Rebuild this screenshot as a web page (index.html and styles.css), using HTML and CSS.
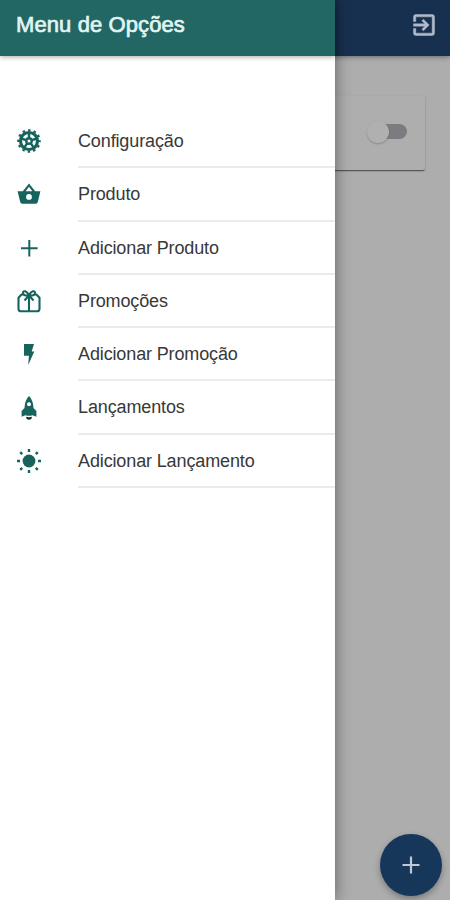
FILE: index.html
```html
<!DOCTYPE html>
<html lang="pt-BR">
<head>
<meta charset="utf-8">
<title>Menu de Opções</title>
<link rel="stylesheet" href="styles.css">
</head>
<body>
<div class="app">
  <header class="topbar">
    <svg class="exit" viewBox="0 0 24 24"><path fill="currentColor" stroke="currentColor" stroke-width=".4" d="M10.1 15.600 11.500 17l5-5-5-5-1.400 1.400L12.700 11H3v2h9.700zM19 3H5a2 2 0 0 0-2 2v4h2V5h14v14H5v-4H3v4a2 2 0 0 0 2 2h14a2 2 0 0 0 2-2V5a2 2 0 0 0-2-2z"/></svg>
  </header>
  <main class="content">
    <section class="card"><span class="switch"><span class="knob"></span></span></section>
  </main>
  <button class="fab"><svg viewBox="0 0 18 18"><path d="M9 .5v17M.5 9h17"/></svg></button>

  <nav class="drawer">
    <h1 class="title"><span>Menu de Opções</span></h1>
    <ul class="menu">
      <li class="item">
        <svg class="icon" viewBox="-12 -12 24 24">
          <circle r="8.500" fill="none" stroke="currentColor" stroke-width="3.200"/>
          <circle r="10.700" fill="none" stroke="currentColor" stroke-width="2.200" stroke-dasharray="2.500 3.102" stroke-dashoffset="1.250"/>
          <path fill="none" stroke="currentColor" stroke-width="2.400" d="M0-3V-8M2.900-.9 7.600-2.500M1.800 2.400 4.700 6.500M-1.800 2.400-4.700 6.500M-2.900-.9-7.600-2.500"/>
          <circle r="2.700" fill="none" stroke="currentColor" stroke-width="2.400"/>
        </svg>
        <span class="label">Configuração</span>
      </li>
      <li class="item">
        <svg class="icon" viewBox="0 0 24 24"><path fill="currentColor" fill-rule="evenodd" d="M.6 9.300h5.200L12 1.500l6.200 7.800h5.200L20.800 20q-.4 1.700-2 1.700H5.200q-1.600 0-2-1.700zM8.700 9.300h6.600L12 4.800zM12 12a2.900 2.900 0 1 0 0 5.800 2.900 2.900 0 0 0 0-5.800z"/></svg>
        <span class="label">Produto</span>
      </li>
      <li class="item">
        <svg class="icon" viewBox="0 0 24 24"><path fill="none" stroke="currentColor" stroke-width="2" d="M12.300 4v16.500M4 12.200h16.600"/></svg>
        <span class="label">Adicionar Produto</span>
      </li>
      <li class="item">
        <svg class="icon" viewBox="0 0 24 24"><g fill="none" stroke="currentColor" stroke-width="2.100"><path d="M7 5.500H4.500L1.500 8.700v11q0 2.600 2.600 2.600h15.800q2.600 0 2.600-2.600v-11l-3-3.200H17M12 6v16"/><path d="M12 6.500C10 1.800 6 1 6 3.800s3 2.900 6 2.700c3 .2 6 .1 6-2.700s-4-2-6 2.700zM11.500 7l-4 4.500M12.500 7l4 4.500"/></g></svg>
        <span class="label">Promoções</span>
      </li>
      <li class="item">
        <svg class="icon" viewBox="0 0 24 24"><path fill="currentColor" d="M7 2h10l-2.300 7.500h2.600L11.200 23l.7-9.300H7z"/></svg>
        <span class="label">Adicionar Promoção</span>
      </li>
      <li class="item">
        <svg class="icon" viewBox="0 0 24 24"><path fill="currentColor" fill-rule="evenodd" d="M12 0q4.300 4.200 4.500 12l2.900 3v5.700l-3.900-1.500q-3.500 1-7 0l-3.900 1.500V15l2.900-3Q7.700 4.200 12 0zm0 6.200a2 2 0 1 0 0 4 2 2 0 0 0 0-4z"/><path fill="#12312f" d="M9 20.800q3 .8 6 0L14.300 23q-2.300 1.500-4.600 0z"/></svg>
        <span class="label">Lançamentos</span>
      </li>
      <li class="item">
        <svg class="icon" viewBox="-12 -12 24 24"><circle r="6.400" fill="currentColor"/><path fill="none" stroke="currentColor" stroke-width="2.400" d="M0-12v3M0 9v3M-12 0h3M9 0h3M-8.800-8.800l2 2M8.800-8.800l-2 2M-8.800 8.800l2-2M8.800 8.800l-2-2"/></svg>
        <span class="label">Adicionar Lançamento</span>
      </li>
    </ul>
  </nav>
</div>
</body>
</html>
```
FILE: styles.css
```css
* { box-sizing: border-box; }
body { margin: 0; font-family: "Liberation Sans", Arial, sans-serif; }
.app {
  position: relative;
  width: 450px;
  height: 900px;
  overflow: hidden;
  background: #adadad;
}
.topbar {
  display: flex;
  justify-content: flex-end;
  height: 56px;
  padding: 11px 12px 0 0;
  background: #18304f;
  color: #b0bac8;
  box-shadow: 0 1px 5px rgba(0, 0, 0, .4);
}
.exit { width: 28px; height: 28px; }
.content { padding: 40px 25px 0 16px; }
.card {
  display: flex;
  justify-content: flex-end;
  height: 74px;
  padding: 28px 18px 0 0;
  border-radius: 2px;
  background: #aeaeae;
  box-shadow: 0 2px 1px -1px rgba(0, 0, 0, .4), 0 1px 2px rgba(0, 0, 0, .28);
}
.switch {
  width: 36px;
  height: 15px;
  border-radius: 8px;
  background: #7c7c80;
}
.knob {
  display: block;
  width: 22px;
  height: 22px;
  margin: -3px 0 0 -4px;
  border-radius: 50%;
  background: #b0b0b0;
  box-shadow: 0 1px 2px rgba(0, 0, 0, .22);
}
.fab {
  position: absolute;
  right: 8px;
  bottom: 4px;
  display: flex;
  align-items: center;
  justify-content: center;
  width: 62px;
  height: 62px;
  padding: 0;
  border: 0;
  border-radius: 50%;
  background: #16365a;
  box-shadow: 0 3px 6px rgba(0, 0, 0, .3);
}
.fab svg {
  width: 18px;
  height: 18px;
  fill: none;
  stroke: #c0c8d4;
  stroke-width: 2.200;
}
.drawer {
  position: absolute;
  top: 0;
  left: 0;
  width: 335px;
  height: 900px;
  background: #fff;
  box-shadow: 1px 0 14px rgba(0, 0, 0, .4);
}
.title {
  height: 56px;
  margin: 0;
  padding: 0 16px;
  background: #226764;
  color: #e0f5f4;
  font-size: 22px;
  font-weight: 400;
  letter-spacing: .1px;
  line-height: 50px;
  box-shadow: 0 1px 5px rgba(0, 0, 0, .35);
  -webkit-text-stroke: .7px currentColor;
}
.menu {
  margin: 0;
  padding: 59px 0 0;
  list-style: none;
}
.item {
  display: flex;
  align-items: center;
  height: 53.300px;
  padding-left: 17px;
  color: #17635d;
}
.icon {
  flex: none;
  width: 24px;
  height: 24px;
  margin: -1px 37px 0 0;
}
.label {
  flex: 1;
  height: 53.300px;
  border-bottom: 2px solid #ebebeb;
  color: #383838;
  font-size: 18px;
  letter-spacing: -.13px;
  line-height: 52px;
}
```
